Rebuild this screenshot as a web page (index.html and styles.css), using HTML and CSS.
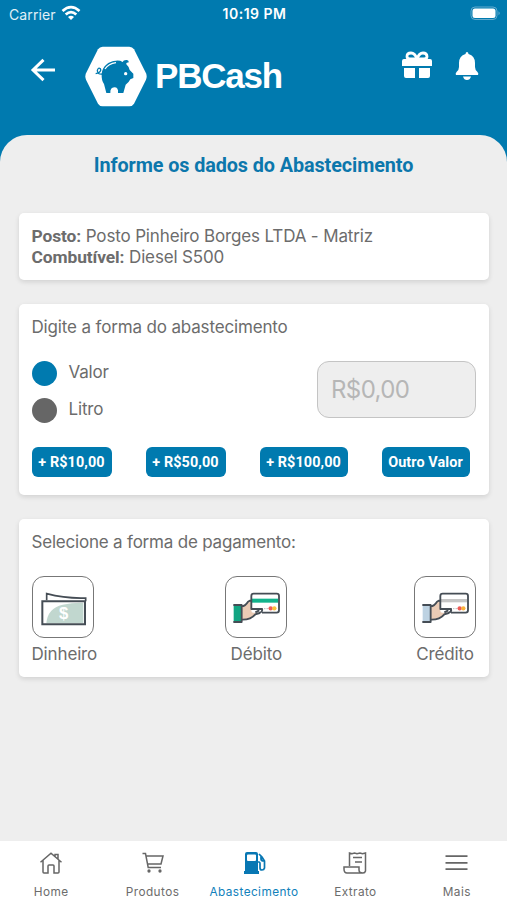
FILE: index.html
```html
<!DOCTYPE html>
<html lang="pt-BR">
<head>
<meta charset="utf-8">
<meta name="viewport" content="width=device-width, initial-scale=1">
<title>PBCash</title>
<link rel="stylesheet" href="styles.css">
</head>
<body>
<div class="app">
  <header class="header">
    <div class="status">
      <div class="carrier"><span>Carrier</span>
        <svg width="20" height="16" viewBox="0 0 20 16" fill="none" stroke="#fff" stroke-width="2.7"><path d="M1.5 6Q10-1.7 18.5 6M4.7 9.6Q10 4.7 15.3 9.6"/><path d="M7 12.1Q10 9.3 13 12.1L10 15Z" fill="#fff" stroke="none"/></svg>
      </div>
      <span class="clock">10:19 PM</span>
      <svg class="battery" width="31" height="15" viewBox="0 0 31 15"><rect x="1" y="1" width="26" height="12.5" rx="4" fill="none" stroke="#63abce" stroke-width="1"/><rect x="2.5" y="2.5" width="23" height="9.5" rx="2.5" fill="#fff"/><path d="M28.5 5.2Q31 7.2 28.5 9.2Z" fill="#63abce"/></svg>
    </div>
    <div class="brandbar">
      <svg class="back" width="26" height="24" viewBox="0 0 26 24" fill="none" stroke="#fff" stroke-width="3"><path d="M25 12H3M13.5 1.8 3 12 13.5 22.2"/></svg>
      <svg class="pig" width="62" height="61" viewBox="255 138 186 183">
        <path fill="#fff" d="M308 140H388Q397 140 402 148L438 220Q442 229 438 239L402 311Q397 319 388 319H308Q299 319 294 311L258 239Q254 229 258 220L294 148Q299 140 308 140Z"/>
        <path fill="#007aaf" d="M305 222C307 199 325 183 348 182Q360 181 368 186Q370 179 381 180L386 183L385 188Q377 187 379 193Q386 199 389 210L400 221V234L391 238Q387 247 377 254L370 279H354Q356 262 343 262Q330 263 331 279H319L312 252Q304 241 305 222Z"/>
        <path fill="none" stroke="#007aaf" stroke-width="4" d="M307 222Q292 224 292 211Q295 201 301 206Q305 213 295 219L287 221"/>
        <path fill="none" stroke="#fff" stroke-width="4" d="M315 207Q325 191 348 188"/><circle cx="377" cy="221" r="5" fill="#fff"/>
      </svg>
      <span class="brand">PBCash</span>
      <svg class="gift" width="30" height="28" viewBox="0 0 30 28"><path fill="#fff" d="M2 8H28Q30 8 30 10V15H0V10Q0 8 2 8ZM2 17H13V27H4Q2 27 2 25ZM17 17H28V25Q28 27 26 27H17Z"/><path fill="none" stroke="#fff" stroke-width="2.8" d="M15 8Q13 2 9 2Q5 2 5 5.5Q5 8 8 8H22Q25 8 25 5.5Q25 2 21 2Q17 2 15 8Z"/></svg>
      <svg class="bell" width="24" height="28" viewBox="0 0 24 28" fill="#fff"><path d="M12 0Q13.3 0 13.5 2Q20 4 20 11V15Q20 18 22.5 20Q24 22 23 23H1Q0 22 1.5 20Q4 18 4 15V11Q4 4 10.5 2Q10.7 0 12 0ZM8 24.5H16Q15 28 12 28T8 24.5Z"/></svg>
    </div>
  </header>
  <main class="panel">
    <h1>Informe os dados do Abastecimento</h1>
    <section class="card station">
      <p class="posto"><b>Posto:</b> Posto Pinheiro Borges LTDA - Matriz</p>
      <p class="fuel"><b>Combutível:</b> Diesel S500</p>
    </section>
    <section class="card supply">
      <p class="digite">Digite a forma do abastecimento</p>
      <div class="entry">
        <div class="options">
          <div class="option"><i class="dot on"></i><span>Valor</span></div>
          <div class="option"><i class="dot"></i><span>Litro</span></div>
        </div>
        <div class="amount">R$0,00</div>
      </div>
      <div class="buttons"><button>+ R$10,00</button><button>+ R$50,00</button><button class="wide">+ R$100,00</button><button class="wide">Outro Valor</button></div>
    </section>
    <section class="card payment">
      <p class="selecione">Selecione a forma de pagamento:</p>
      <div class="methods">
        <div class="method first"><div class="tile">
          <svg width="62" height="62" viewBox="0 0 186 186"><path fill="#fff" stroke="#454d55" stroke-width="5" d="M44 73V53Q100 68 161 66V76"/><path fill="#fff" d="M31 76H159V145H31Z"/><path fill="#c1d7cf" d="M43 142Q47 96 92 86Q123 79 154 80V142Z"/><path fill="none" stroke="#454d55" stroke-width="6" d="M31 76H159V145H31Z"/><text x="95" y="129" text-anchor="middle" class="dollar">$</text></svg>
        </div><span>Dinheiro</span></div>
        <div class="method"><div class="tile">
          <svg width="62" height="62" viewBox="0 0 186 186"><path fill="#12a582" d="M26 88H49V137H26Z"/><path fill="#eacbb5" d="M50 91Q61 90 69 77L81 71V99H113Q111 110 91 115Q78 132 50 131Z"/><rect x="79" y="53" width="83" height="57" rx="6" fill="#fff"/><path fill="#12b38c" d="M81 68H160V80H81Z"/><path stroke="#999" stroke-width="3" stroke-dasharray="3 4" d="M90 98H128"/><circle cx="137" cy="97" r="6.5" fill="#ef5b57"/><circle cx="148" cy="97" r="6.5" fill="#fbc13c"/><path fill="none" stroke="#454d55" stroke-width="5.5" stroke-linejoin="round" d="M25 87H50V138H25M50 91Q61 90 69 77L79 71V60Q79 53 86 53H155Q162 53 162 60V103Q162 110 155 110H111M79 71V99H111Q114 106 104 111L91 115Q77 132 50 131M91 109 103 103"/></svg>
        </div><span>Débito</span></div>
        <div class="method"><div class="tile">
          <svg width="62" height="62" viewBox="0 0 186 186"><path fill="#bdd2e2" d="M26 88H49V137H26Z"/><path fill="#eacbb5" d="M50 91Q61 90 69 77L81 71V99H113Q111 110 91 115Q78 132 50 131Z"/><rect x="79" y="53" width="83" height="57" rx="6" fill="#fff"/><path fill="#c5c5c5" d="M81 69H160V79H81Z"/><path stroke="#999" stroke-width="3" stroke-dasharray="3 4" d="M90 98H128"/><circle cx="137" cy="97" r="6.5" fill="#ef5b57"/><circle cx="148" cy="97" r="6.5" fill="#fbb33c"/><path fill="none" stroke="#454d55" stroke-width="5.5" stroke-linejoin="round" d="M25 87H50V138H25M50 91Q61 90 69 77L79 71V60Q79 53 86 53H155Q162 53 162 60V103Q162 110 155 110H111M79 71V99H111Q114 106 104 111L91 115Q77 132 50 131M91 109 103 103"/></svg>
        </div><span>Crédito</span></div>
      </div>
    </section>
  </main>
  <nav class="tabs">
    <a><svg width="24" height="24" viewBox="0 0 24 24" fill="none" stroke="#666" stroke-width="1.5"><path d="M1.5 11.3 12 2.3 22.5 11.3M4 9.5V21Q4 22 5 22H9V15Q9 14 10 14H14Q15 14 15 15V22H19Q20 22 20 21V9.5M16 5.5V3.5H19V8.5"/></svg><span>Home</span></a>
    <a><svg width="24" height="24" viewBox="0 0 24 24" fill="none" stroke="#666" stroke-width="1.5"><path d="M1.5 2.5H4.5L7.2 16.5H20M5 5H22L20 13H6.5"/><circle cx="8" cy="20" r=".9" fill="#666"/><circle cx="19" cy="20" r=".9" fill="#666"/></svg><span>Produtos</span></a>
    <a class="active"><svg width="24" height="24" viewBox="0 0 24 24"><path fill="#0877b3" fill-rule="evenodd" d="M3 20V3Q3 1 5 1H14Q16 1 16 3V20H17V23H2V20ZM6 3.5Q5 3.5 5 4.5V9Q5 10 6 10H13Q14 10 14 9V4.5Q14 3.5 13 3.5Z"/><path fill="none" stroke="#0877b3" stroke-width="1.7" d="M16 11H17Q18 11 18 13V17Q18 19 20 19T22.5 17V10L20 6 17 3M19 5V8Q19 10 22 10"/></svg><span>Abastecimento</span></a>
    <a><svg width="24" height="24" viewBox="0 0 24 24" fill="none" stroke="#666" stroke-width="1.5"><path d="M6.5 15V2L9 2.8 11.5 2 14 2.8 17 2 19.5 2.8 22.5 2V20Q22 22 20 22H4Q1 22 1 18V16H16V19Q16 22 20 22M10 6.5H19M12 11H19"/></svg><span>Extrato</span></a>
    <a><svg width="24" height="24" viewBox="0 0 24 24" fill="none" stroke="#666" stroke-width="1.8"><path d="M.5 5.2H22.5M.5 11.8H22.5M.5 18.2H22.5"/></svg><span>Mais</span></a>
  </nav>
</div>
</body>
</html>
```
FILE: styles.css
```css
* { box-sizing: border-box; }
body { margin: 0; font-family: Inter, sans-serif; color: #6c6c6c; background: #007aaf; }
p, h1 { margin: 0; font-weight: 400; }
svg { display: block; flex: none; }
.app { height: 900px; display: flex; flex-direction: column; overflow: hidden; }
.header { height: 135px; flex: none; color: #fff; }
.status { height: 28px; display: grid; grid-template-columns: 1fr auto 1fr; align-items: center; padding: 0 6px 0 9px; }
.carrier { display: flex; gap: 5px; align-items: center; font-size: 14px; letter-spacing: .1px; color: #e0f0f7; }
.carrier svg { margin-top: -2px; }
.clock { font-size: 14px; font-weight: 600; letter-spacing: .5px; margin-right: 1px; margin-top: -1px; }
.battery { justify-self: end; margin-top: -1px; }
.brandbar { display: flex; align-items: flex-start; padding: 18px 28px 0 30px; }
.back { margin-top: 12px; }
.pig { margin-left: 29px; }
.brand { margin: 8px 0 0 8px; width: 130px; font: 700 35px/44px "Liberation Sans", sans-serif; letter-spacing: -1.2px; white-space: nowrap; }
.gift { margin: 5px 0 0 auto; }
.bell { margin: 6px 0 0 23px; }
.panel { flex: 1; background: #eee; border-radius: 27px 27px 0 0; padding: 19px 18px 0 19px; }
h1 { height: 59px; text-align: center; font: 700 19.8px/24px Roboto, sans-serif; letter-spacing: -.08px; color: #0c77ac; padding-right: 1px; }
.card { background: #fff; border-radius: 5px; box-shadow: 0 2px 5px rgba(0,0,0,.12); padding: 13px 13px 0 12.5px; margin-bottom: 24px; font-size: 17px; line-height: 21px; letter-spacing: -.15px; white-space: nowrap; }
.station { height: 67px; }
.station b { font-family: Roboto, sans-serif; font-weight: 700; font-size: 17.4px; letter-spacing: -.1px; }
.selecione { letter-spacing: -.2px; }
.supply { height: 191px; }
.entry { display: flex; justify-content: space-between; margin-top: 23px; height: 57px; }
.options { display: flex; flex-direction: column; gap: 12px; }
.option { display: flex; align-items: center; gap: 12px; height: 25px; flex: none; }
.option span { margin-top: -3px; }
.dot { width: 25px; height: 25px; border-radius: 50%; background: #666; }
.on { background: #007aaf; }
.amount { width: 159px; height: 57px; border: 1px solid #c4c4c4; border-radius: 12px; background: #eee; color: #b6b6b6; font-size: 24px; letter-spacing: -.6px; line-height: 55px; padding-left: 13px; }
.buttons { display: flex; gap: 34px; margin-top: 29px; }
button { width: 80px; height: 30px; padding: 0; border: 0; border-radius: 6px; background: #007aaf; color: #fff; font: 700 14.4px Roboto, sans-serif; letter-spacing: .1px; white-space: nowrap; }
.wide { width: 88px; }
.payment { height: 158px; margin: 0; }
.methods { display: flex; justify-content: space-between; margin-top: 23px; }
.method { display: flex; flex-direction: column; align-items: center; width: 62px; gap: 6px; }
.first { align-items: flex-start; width: 67px; }
.tile { width: 62px; height: 62px; border: 1px solid #777; border-radius: 12px; }
.tile svg { margin: -1px; }
.dollar { font: 700 50px "Liberation Sans", sans-serif; letter-spacing: 0; fill: #fff; }
.tabs { height: 59px; flex: none; display: grid; grid-template-columns: repeat(5, 1fr); background: #fff; font-size: 11.8px; letter-spacing: .42px; }
.tabs a { display: flex; flex-direction: column; align-items: center; padding: 10px 0 0 1px; gap: 10px; line-height: 15px; }
.active { color: #1181bb; }
```
